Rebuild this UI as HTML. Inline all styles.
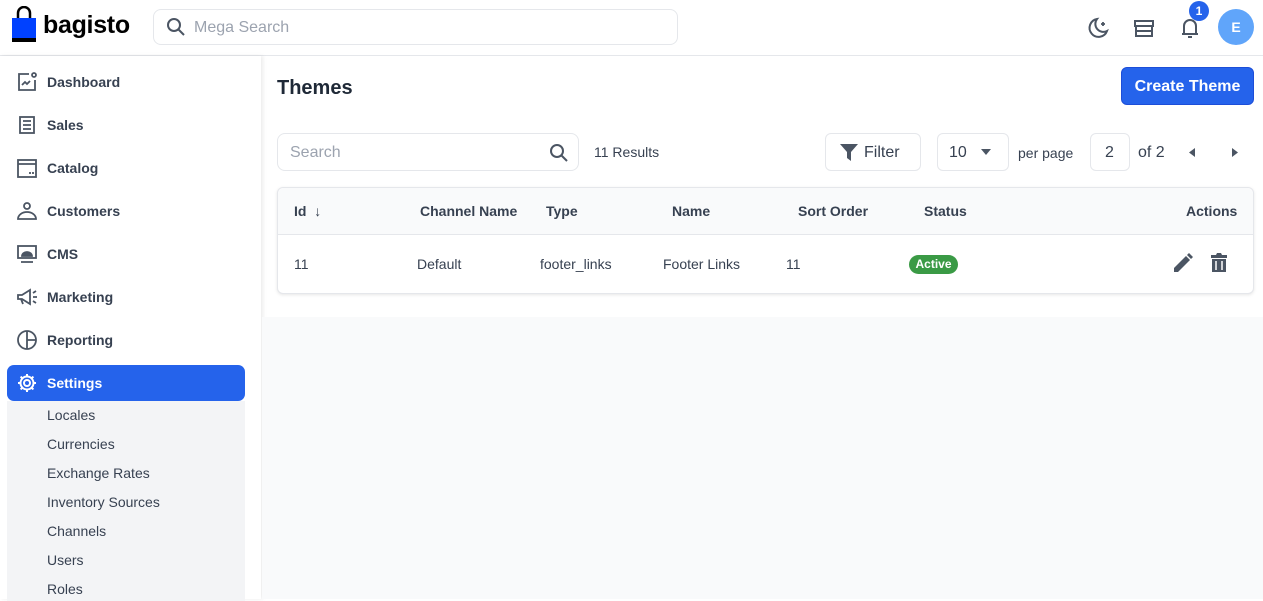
<!DOCTYPE html>
<html><head><meta charset="utf-8"><style>
*{box-sizing:border-box;margin:0;padding:0}
body{width:1263px;height:599px;overflow:hidden;font-family:"Liberation Sans",sans-serif;background:#fff;color:#1f2937;position:relative}
.abs{position:absolute}
.top{left:0;top:0;width:1263px;height:56px;border-bottom:1px solid #e5e7eb;background:#fff}
.side{left:0;top:56px;width:261px;height:543px;background:#fff;box-shadow:2px 0 4px rgba(0,0,0,.08)}
.nav{position:absolute;left:16px;font-size:14px;font-weight:bold;color:#374151;display:flex;align-items:center}
.nav svg{width:22px;height:22px;margin-right:9px}
.sub{position:absolute;left:47px;font-size:14px;color:#374151}
.bx{border:1px solid #e5e7eb;border-radius:6px;background:#fff;position:absolute}
.th{position:absolute;top:203px;font-size:14px;font-weight:bold;color:#374151}
.td{position:absolute;top:256px;font-size:14px;color:#374151}
</style></head><body>
<div class="abs top">
 <svg class="abs" style="left:12px;top:6px" width="24" height="36" viewBox="0 0 24 36"><path d="M6 12V7a6 6 0 0 1 12 0v5" fill="none" stroke="#000" stroke-width="2.5"/><rect x="0" y="12" width="24" height="22" fill="#0041ff"/><rect x="0" y="32" width="24" height="4" fill="#000"/></svg>
 <div class="abs" style="left:43px;top:11px;font-size:25px;font-weight:bold;color:#000;letter-spacing:-.3px">bagisto</div>
 <div class="bx" style="left:153px;top:9px;width:525px;height:36px;border-radius:8px"></div>
 <svg class="abs" style="left:166px;top:17px" width="20" height="20" viewBox="0 0 20 20" fill="none" stroke="#4b5563" stroke-width="2"><circle cx="8" cy="8" r="6"/><path d="M12.5 12.5L18 18"/></svg>
 <div class="abs" style="left:194px;top:19px;font-size:16px;color:#9ca3af">Mega Search</div>
 <svg class="abs" style="left:1087px;top:16px" width="24" height="24" viewBox="0 0 24 24" fill="none" stroke="#4b5563" stroke-width="2"><path d="M10 3a9 9 0 1 0 10 12A8 8 0 0 1 10 3z"/><path d="M16 6v4M14 8h4" stroke-width="1.8"/></svg>
 <svg class="abs" style="left:1132px;top:16px" width="24" height="24" viewBox="0 0 24 24" fill="none" stroke="#4b5563" stroke-width="2"><path d="M3 5h18v5H3zM4 10v10h16V10M4 15h16"/></svg>
 <svg class="abs" style="left:1179px;top:16px" width="22" height="24" viewBox="0 0 22 24" fill="none" stroke="#4b5563" stroke-width="2"><path d="M5 18V10a6 6 0 0 1 12 0v8M3 18h16M9 21h4"/></svg>
 <div class="abs" style="left:1189px;top:1px;width:20px;height:20px;border-radius:50%;background:#2563eb;color:#fff;font-size:12px;font-weight:bold;text-align:center;line-height:20px">1</div>
 <div class="abs" style="left:1218px;top:9px;width:36px;height:36px;border-radius:50%;background:#60a5fa;color:#fff;font-size:14px;font-weight:bold;text-align:center;line-height:36px">E</div>
</div>
<div class="abs side">
 <div class="nav" style="top:15px"><svg viewBox="0 0 22 22" fill="none" stroke="#4b5563" stroke-width="1.8"><path d="M13 3H3v16h16V9"/><circle cx="18" cy="4" r="2"/><path d="M6 14l3-3 2 2 3-3"/></svg>Dashboard</div>
 <div class="nav" style="top:58px"><svg viewBox="0 0 22 22" fill="none" stroke="#4b5563" stroke-width="1.8"><rect x="4" y="3" width="14" height="16"/><path d="M7 7h8M7 11h8M7 15h8"/></svg>Sales</div>
 <div class="nav" style="top:101px"><svg viewBox="0 0 22 22" fill="none" stroke="#4b5563" stroke-width="1.8"><rect x="2" y="3" width="18" height="17"/><path d="M2 7h18M14 15v2M17 15v2"/></svg>Catalog</div>
 <div class="nav" style="top:144px"><svg viewBox="0 0 22 22" fill="none" stroke="#4b5563" stroke-width="1.8"><circle cx="11" cy="6" r="3"/><path d="M2 19a9 7 0 0 1 18 0z"/></svg>Customers</div>
 <div class="nav" style="top:187px"><svg viewBox="0 0 22 22" fill="none" stroke="#4b5563" stroke-width="1.8"><rect x="2" y="3" width="18" height="12"/><path d="M5 19h12M6 13a5 4 0 0 1 10 0z" fill="#4b5563"/></svg>CMS</div>
 <div class="nav" style="top:230px"><svg viewBox="0 0 22 22" fill="none" stroke="#4b5563" stroke-width="1.8"><path d="M2 9h4l8-5v14l-8-5H2zM5 13l2 5M17 7l3-2M17 11h4M17 15l3 2"/></svg>Marketing</div>
 <div class="nav" style="top:273px"><svg viewBox="0 0 22 22" fill="none" stroke="#4b5563" stroke-width="1.8"><circle cx="11" cy="11" r="9"/><path d="M11 2v18M11 11h9"/></svg>Reporting</div>
 <div class="abs" style="left:7px;top:309px;width:238px;height:36px;background:#2563eb;border-radius:7px"></div>
 <div class="nav" style="top:316px;color:#fff"><svg viewBox="0 0 22 22" fill="none" stroke="#fff" stroke-width="2"><circle cx="11" cy="11" r="3"/><path d="M11 2v3M11 17v3M2 11h3M17 11h3M4.6 4.6l2.1 2.1M15.3 15.3l2.1 2.1M4.6 17.4l2.1-2.1M15.3 6.7l2.1-2.1"/><circle cx="11" cy="11" r="6.5"/></svg>Settings</div>
 <div class="abs" style="left:7px;top:345px;width:238px;height:200px;background:#f3f4f6"></div>
 <div class="sub" style="top:351px">Locales</div>
 <div class="sub" style="top:380px">Currencies</div>
 <div class="sub" style="top:409px">Exchange Rates</div>
 <div class="sub" style="top:438px">Inventory Sources</div>
 <div class="sub" style="top:467px">Channels</div>
 <div class="sub" style="top:496px">Users</div>
 <div class="sub" style="top:525px">Roles</div>
</div>
<div class="abs" style="left:262px;top:317px;width:1001px;height:282px;background:#f9fafb"></div>
<div class="abs" style="left:277px;top:77px;font-size:20px;font-weight:bold;color:#1f2937">Themes</div>
<div class="abs" style="left:1121px;top:67px;width:133px;height:38px;background:#2563eb;border-radius:6px;border:1px solid #1d4ed8;color:#fff;font-size:16px;font-weight:bold;text-align:center;line-height:38px">Create Theme</div>
<div class="bx" style="left:277px;top:133px;width:302px;height:38px;border-radius:8px"></div>
<div class="abs" style="left:290px;top:144px;font-size:16px;color:#9ca3af">Search</div>
<svg class="abs" style="left:549px;top:143px" width="20" height="20" viewBox="0 0 20 20" fill="none" stroke="#4b5563" stroke-width="2"><circle cx="8" cy="8" r="6"/><path d="M12.5 12.5L18 18"/></svg>
<div class="abs" style="left:594px;top:144px;font-size:14px;color:#374151">11 Results</div>
<div class="bx" style="left:825px;top:133px;width:96px;height:38px"></div>
<svg class="abs" style="left:840px;top:144px" width="18" height="17" viewBox="0 0 18 17"><path d="M0 0h18l-7 8v9l-4-3V8z" fill="#4b5563"/></svg>
<div class="abs" style="left:864px;top:144px;font-size:16px;color:#374151">Filter</div>
<div class="bx" style="left:937px;top:133px;width:72px;height:38px"></div>
<div class="abs" style="left:949px;top:144px;font-size:16px;color:#374151">10</div>
<svg class="abs" style="left:981px;top:149px" width="10" height="6"><path d="M0 0h10L5 6z" fill="#4b5563"/></svg>
<div class="abs" style="left:1018px;top:145px;font-size:14px;color:#374151">per page</div>
<div class="bx" style="left:1090px;top:133px;width:40px;height:38px"></div>
<div class="abs" style="left:1105px;top:144px;font-size:16px;color:#374151">2</div>
<div class="abs" style="left:1138px;top:144px;font-size:16px;color:#374151">of 2</div>
<svg class="abs" style="left:1189px;top:148px" width="6" height="9"><path d="M6 0v9L0 4.5z" fill="#4b5563"/></svg>
<svg class="abs" style="left:1232px;top:148px" width="6" height="9"><path d="M0 0v9l6-4.5z" fill="#4b5563"/></svg>
<div class="bx" style="left:277px;top:187px;width:977px;height:107px;box-shadow:0 1px 3px rgba(0,0,0,.1)"></div>
<div class="abs" style="left:278px;top:188px;width:975px;height:47px;background:#f9fafb;border-bottom:1px solid #e5e7eb;border-radius:6px 6px 0 0"></div>
<div class="th" style="left:294px">Id &nbsp;<span style="font-weight:normal">↓</span></div>
<div class="th" style="left:420px">Channel Name</div>
<div class="th" style="left:546px">Type</div>
<div class="th" style="left:672px">Name</div>
<div class="th" style="left:798px">Sort Order</div>
<div class="th" style="left:924px">Status</div>
<div class="th" style="left:1186px">Actions</div>
<div class="td" style="left:294px">11</div>
<div class="td" style="left:417px">Default</div>
<div class="td" style="left:540px">footer_links</div>
<div class="td" style="left:663px">Footer Links</div>
<div class="td" style="left:786px">11</div>
<div class="abs" style="left:909px;top:255px;width:49px;height:19px;border-radius:10px;background:#3a9a45;color:#fff;font-size:12px;font-weight:bold;text-align:center;line-height:19px">Active</div>
<svg class="abs" style="left:1173px;top:253px" width="20" height="20" viewBox="0 0 20 20"><path d="M1 19v-4L13 3l4 4L5 19zM14 2l2-2 4 4-2 2z" fill="#4b5563"/></svg>
<svg class="abs" style="left:1211px;top:253px" width="16" height="19" viewBox="0 0 16 19"><path d="M0 2h5l1-2h4l1 2h5v3H0zM1 6h14v13H1z" fill="#4b5563"/><path d="M5 8v9M11 8v9" stroke="#fff" stroke-width="1.5"/></svg>
</body></html>
